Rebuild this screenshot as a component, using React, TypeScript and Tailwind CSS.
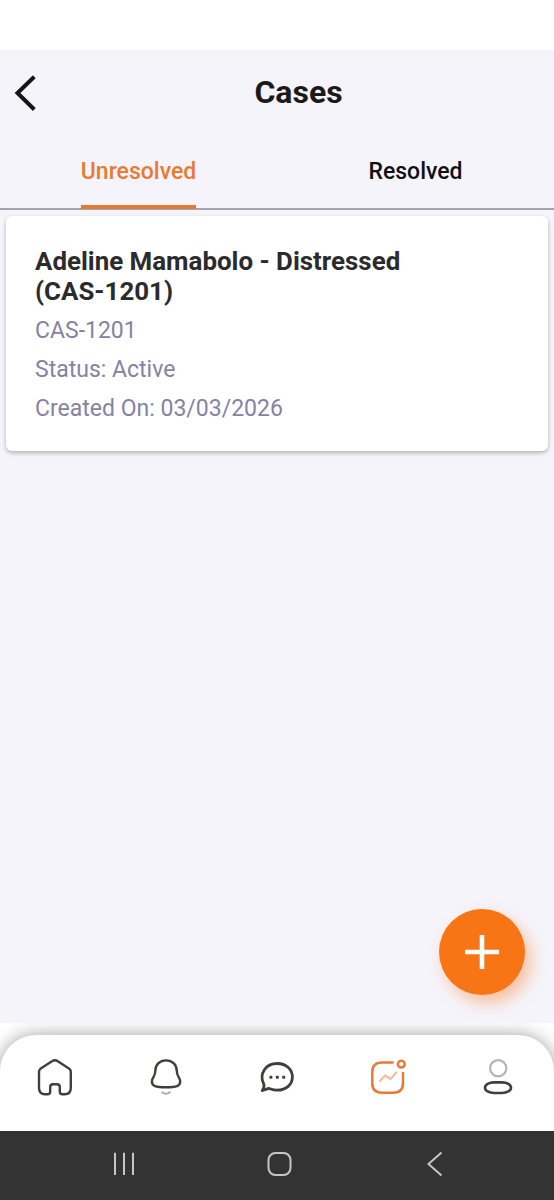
import type { ReactNode } from "react";

type CaseItem = {
    id: string;
    title: string;
    status: string;
    createdOn: string;
};

type IconProps = {
    children: ReactNode;
};

const cases: CaseItem[] = [
    {
        id: "CAS-1201",
        title: "Adeline Mamabolo - Distressed (CAS-1201)",
        status: "Active",
        createdOn: "03/03/2026",
    },
];

const NavIcon = ({ children }: IconProps) => {
    return (
        <button className="flex justify-center">
            <svg
                width="40"
                height="40"
                viewBox="0 0 40 40"
                fill="none"
                stroke="#3f3f3c"
                strokeWidth="2.4"
                strokeLinecap="round"
                strokeLinejoin="round"
            >
                {children}
            </svg>
        </button>
    );
};

const Header = () => {
    return (
        <header className="grid h-[86px] grid-cols-[60px_1fr_17px] items-center">
            <button className="pl-[13px]">
                <svg width="26" height="38" viewBox="0 0 26 38" fill="none" stroke="#161616" strokeWidth="4">
                    <path d="M21.3 2.7L4.5 19L21.3 35.5" />
                </svg>
            </button>
            <h1 className="-mt-0.5 text-center text-[32px] font-bold leading-none text-[#1a1a1a]">Cases</h1>
        </header>
    );
};

const Tabs = () => {
    return (
        <div className="grid h-[74px] grid-cols-2 border-b-2 border-[#a5a4ab] text-[23px] font-medium leading-[27px]">
            <button className="-mb-px flex justify-center">
                <span className="h-full border-b-4 border-[#e27b36] pt-[22px] text-[#ea7a30]">Unresolved</span>
            </button>
            <button className="flex justify-center pt-[22px] text-[#101014]">Resolved</button>
        </div>
    );
};

const CaseCard = ({ item }: { item: CaseItem }) => {
    return (
        <div className="mx-1.5 mt-1.5 h-[235px] rounded-md bg-white pt-[30px] pr-[100px] pl-[29px] shadow-[0_2px_4px_rgba(0,0,0,0.28)]">
            <div className="text-[25.9px] font-bold leading-[30px] text-[#2b2b2b]">{item.title}</div>
            <div className="mt-[5px] text-[23px] leading-[39px] text-[#8682a3]">
                <div>{item.id}</div>
                <div>Status: {item.status}</div>
                <div>Created On: {item.createdOn}</div>
            </div>
        </div>
    );
};

const BottomNav = () => {
    return (
        <nav className="mt-3 grid h-24 grid-cols-5 rounded-t-[36px] bg-white pt-[22px] shadow-[0_0_18px_rgba(0,0,0,0.38)]">
            <NavIcon>
                <path d="M4 14.8Q4 13 5.4 11.8L17 4.3Q20 2.2 22.8 4.3L34.3 11.8Q35.8 13 35.8 14.8V31Q35.8 37.2 29.7 37.2H27.5Q24.8 37.2 24.8 34.5V30Q24.8 27.2 22 27.2H18Q15.2 27.2 15.2 30V34.5Q15.2 37.2 12.5 37.2H10Q4 37.2 4 31Z" />
            </NavIcon>
            <NavIcon>
                <path d="M20 3.4C13.5 3.4 9.3 8 9.3 14C9.3 20 5.9 20 5.9 24.5C5.9 29 9.5 30.3 20 30.3C30.5 30.3 34.2 29 34.2 24.5C34.2 20 30.8 20 30.8 14C30.8 8 26.5 3.4 20 3.4Z" />
                <path d="M16.2 35.3Q20 38.3 23.8 35.3" stroke="#aaa" strokeWidth="2" />
            </NavIcon>
            <NavIcon>
                <path
                    d="M5.2 33.5C7.3 30.8 7.5 28.5 6.4 26.2C2.4 17.2 8 6.5 20.2 6.5C29.5 6.5 35.4 12.7 35.4 20C35.4 27.5 29.2 33.2 20.2 33.2C16.5 33.2 14.2 32.2 12.2 31.5C10 31.3 7.8 33.2 5.2 33.5Z"
                    strokeWidth="2.8"
                />
                <g fill="#3f3f3c" stroke="none">
                    <rect x="12.4" y="18.8" width="3" height="3" rx=".8" />
                    <rect x="18.8" y="18.8" width="3" height="3" rx=".8" />
                    <rect x="25.2" y="18.8" width="3" height="3" rx=".8" />
                </g>
            </NavIcon>
            <NavIcon>
                <g stroke="#e77b36" strokeWidth="2.5">
                    <path
                        d="M25.6 5.4H14Q4.3 5.4 4.3 15V26Q4.3 35.8 14 35.8H25.3Q35 35.8 35 26V15"
                        strokeLinecap="butt"
                    />
                    <circle cx="33.3" cy="7.2" r="3.4" />
                    <path d="M12 24L17 18.5L22.5 22L28.3 15.6" stroke="#f5c09d" strokeWidth="2.3" />
                </g>
            </NavIcon>
            <NavIcon>
                <circle cx="19.2" cy="11.3" r="8.1" stroke="#b3b3b3" strokeWidth="2.2" />
                <rect x="6" y="25.4" width="26" height="10.6" rx="9" ry="5.3" strokeWidth="2.6" />
            </NavIcon>
        </nav>
    );
};

// Android three button bar
const SystemBar = () => {
    return (
        <div className="flex h-[69px] justify-between bg-[#333] pt-5 pr-[106px] pl-[111px]">
            <svg width="26" height="26" viewBox="0 0 26 26" stroke="#c6c6c6" strokeWidth="2">
                <path d="M4 1.8V24M13 1.8V24M22 1.8V24" />
            </svg>
            <svg width="26" height="26" viewBox="0 0 26 26" fill="none" stroke="#c6c6c6" strokeWidth="2">
                <rect x="1.5" y="2" width="22" height="22" rx="7" />
            </svg>
            <svg width="26" height="26" viewBox="0 0 26 26" fill="none" stroke="#c6c6c6" strokeWidth="2">
                <path d="M19.5 1.5L6.5 13L19.5 24.5" />
            </svg>
        </div>
    );
};

const App = () => {
    return (
        <div className="flex h-[1200px] w-[554px] flex-col overflow-hidden bg-white pt-[50px] font-['Roboto',sans-serif]">
            <main className="relative h-[973px] bg-[#f5f4fa]">
                <Header />
                <Tabs />
                {cases.map((item) => (
                    <CaseCard key={item.id} item={item} />
                ))}
                <button className="absolute right-[29px] bottom-7 flex size-[86.5px] items-center justify-center rounded-full bg-[#f87516] shadow-[6px_8px_16px_rgba(249,115,22,0.4)]">
                    <svg width="34" height="34" viewBox="0 0 34 34" stroke="#fff" strokeWidth="4.6">
                        <path d="M17 0V34M0 17H34" />
                    </svg>
                </button>
            </main>
            <div className="overflow-hidden">
                <BottomNav />
            </div>
            <SystemBar />
        </div>
    );
};

export default App;
